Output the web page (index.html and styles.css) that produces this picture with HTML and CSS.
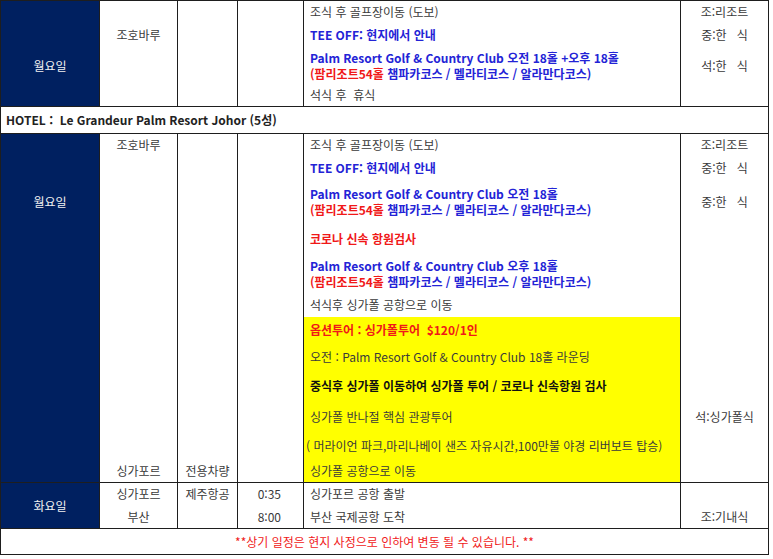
FILE: index.html
```html
<!DOCTYPE html>
<html lang="ko">
<head>
<meta charset="utf-8">
<title>일정표</title>
<link rel="stylesheet" href="styles.css">
</head>
<body>
<table class="sched">
  <colgroup>
    <col class="c1"><col class="c2"><col class="c3"><col class="c4"><col class="c5"><col class="c6">
  </colgroup>
  <tbody>
    <!-- Block 1 -->
    <tr class="top h23">
      <td class="day" rowspan="2"></td>
      <td class="ctr"></td>
      <td rowspan="4"></td>
      <td rowspan="4"></td>
      <td class="txt">조식 후 골프장이동 (도보)</td>
      <td class="ctr">조:리조트</td>
    </tr>
    <tr class="h23">
      <td class="ctr">조호바루</td>
      <td class="txt blue b">TEE OFF: 현지에서 안내</td>
      <td class="ctr">중:한   식</td>
    </tr>
    <tr class="h38">
      <td class="day">월요일</td>
      <td class="ctr" rowspan="2"></td>
      <td class="txt blue b two">Palm Resort Golf &amp; Country Club 오전 18홀 +오후 18홀<br><span class="red">(팜리조트54홀</span> 챔파카코스 / 멜라티코스 / 알라만다코스)</td>
      <td class="ctr">석:한   식</td>
    </tr>
    <tr class="h22">
      <td class="day"></td>
      <td class="txt">석식 후  휴식</td>
      <td></td>
    </tr>

    <!-- Hotel -->
    <tr class="top h27">
      <td class="hotel" colspan="6">HOTEL :  Le Grandeur Palm Resort Johor (5성)</td>
    </tr>

    <!-- Block 2 -->
    <tr class="top h23">
      <td class="day" rowspan="2"></td>
      <td class="ctr">조호바루</td>
      <td rowspan="11"></td>
      <td rowspan="12"></td>
      <td class="txt">조식 후 골프장이동 (도보)</td>
      <td class="ctr">조:리조트</td>
    </tr>
    <tr class="h23">
      <td rowspan="10"></td>
      <td class="txt blue b">TEE OFF: 현지에서 안내</td>
      <td class="ctr">중:한   식</td>
    </tr>
    <tr class="h45">
      <td class="day">월요일</td>
      <td class="txt blue b two">Palm Resort Golf &amp; Country Club 오전 18홀<br><span class="red">(팜리조트54홀</span> 챔파카코스 / 멜라티코스 / 알라만다코스)</td>
      <td class="ctr">중:한   식</td>
    </tr>
    <tr class="h29">
      <td class="day" rowspan="9"></td>
      <td class="txt red b">코로나 신속 항원검사</td>
      <td rowspan="6"></td>
    </tr>
    <tr class="h40">
      <td class="txt blue b two">Palm Resort Golf &amp; Country Club 오후 18홀<br><span class="red">(팜리조트54홀</span> 챔파카코스 / 멜라티코스 / 알라만다코스)</td>
    </tr>
    <tr class="h23">
      <td class="txt">석식후 싱가폴 공항으로 이동</td>
    </tr>
    <tr class="h26">
      <td class="txt hl red b">옵션투어 : 싱가폴투어  $120/1인</td>
    </tr>
    <tr class="h28">
      <td class="txt hl">오전 : Palm Resort Golf &amp; Country Club 18홀 라운딩</td>
    </tr>
    <tr class="h31">
      <td class="txt hl dark b">중식후 싱가폴 이동하여 싱가폴 투어 / 코로나 신속항원 검사</td>
    </tr>
    <tr class="h30">
      <td class="txt hl">싱가폴 반나절 핵심 관광투어</td>
      <td class="ctr">석:싱가폴식</td>
    </tr>
    <tr class="h28">
      <td class="txt hl tight">( 머라이언 파크,마리나베이 샌즈 자유시간,100만불 야경 리버보트 탑승)</td>
      <td rowspan="2"></td>
    </tr>
    <tr class="h23">
      <td class="ctr">싱가포르</td>
      <td class="ctr">전용차량</td>
      <td class="txt hl">싱가폴 공항으로 이동</td>
    </tr>

    <!-- Block 3 -->
    <tr class="top h23">
      <td class="day" rowspan="2">화요일</td>
      <td class="ctr">싱가포르</td>
      <td class="ctr">제주항공</td>
      <td class="time">0:35</td>
      <td class="txt">싱가포르 공항 출발</td>
      <td></td>
    </tr>
    <tr class="h23">
      <td class="ctr">부산</td>
      <td></td>
      <td class="time">8:00</td>
      <td class="txt">부산 국제공항 도착</td>
      <td class="ctr">조:기내식</td>
    </tr>

    <!-- Footer -->
    <tr class="top bottom h26">
      <td class="note" colspan="6">**상기 일정은 현지 사정으로 인하여 변동 될 수 있습니다. **</td>
    </tr>
  </tbody>
</table>
</body>
</html>
```

FILE: styles.css
```css
html, body {
  margin: 0;
  padding: 0;
  background: #ffffff;
}

.sched {
  border-collapse: collapse;
  table-layout: fixed;
  width: 769px;
  font-family: "Noto Sans CJK KR", "Noto Sans", sans-serif;
  font-size: 12px;
  color: #3a3a3a;
}

.c1 { width: 99px; }
.c2 { width: 78px; }
.c3 { width: 60px; }
.c4 { width: 66px; }
.c5 { width: 377px; }
.c6 { width: 88px; }

.sched td {
  padding: 0;
  border-left: 1px solid #1e1e1e;
  border-right: 1px solid #1e1e1e;
  border-top: none;
  border-bottom: none;
  white-space: pre;
  vertical-align: middle;
  line-height: 16px;
  overflow: hidden;
}

.sched tr.top td { border-top: 1px solid #1e1e1e; }
.sched tr.bottom td { border-bottom: 1px solid #1e1e1e; }

.h22 { height: 22px; }
.h23 { height: 23px; }
.h26 { height: 26px; }
.h27 { height: 27px; }
.h28 { height: 28px; }
.h29 { height: 29px; }
.h30 { height: 30px; }
.h31 { height: 31px; }
.h38 { height: 38px; }
.h40 { height: 40px; }
.h45 { height: 45px; }

.sched td.day {
  background: #002060;
  color: #f2f2f2;
  text-align: center;
  font-size: 12px;
}

.sched td.ctr { text-align: center; }

.sched td.time {
  text-align: right;
  padding-right: 22px;
}

.sched td.txt { padding-left: 6px; }
.sched td.tight { padding-left: 2px; }
.sched td.hl { background: #ffff00; }

.blue { color: #2323d6; }
.red { color: #f01818; }
.dark { color: #111111; }
.b { font-weight: bold; }

.sched td.hotel {
  padding-left: 5px;
  font-weight: bold;
  color: #222222;
}

.sched td.note {
  text-align: center;
  color: #f02020;
}
```
